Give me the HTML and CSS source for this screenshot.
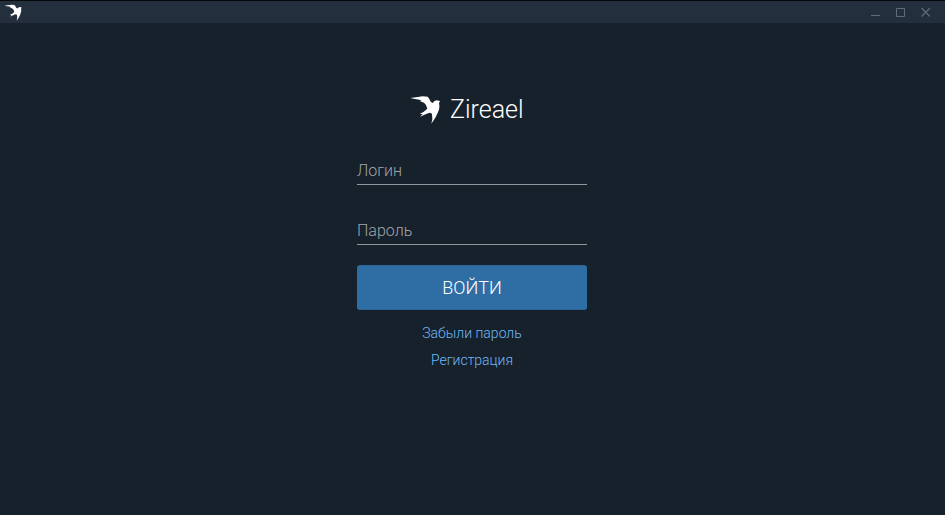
FILE: index.html
```html
<!DOCTYPE html>
<html lang="ru">
<head>
<meta charset="utf-8">
<title>Zireael</title>
<link rel="stylesheet" href="styles.css">
</head>
<body>
<svg class="defs" width="0" height="0">
  <symbol id="bird" viewBox="0 0 108 108">
    <path d="M7 24 L24 22 L44 19 L59 20 Q64 25 68 35 L74 39 Q79 31 86 31 L96 33 L93 40 Q97 53 89 69 Q82 86 70 101 Q75 86 72 72 L67 68 Q60 68 53 73 L36 80 L44 72 L35 72 Q48 66 58 56 Q57 45 48 38 L35 33 L41 31 Q30 28 20 27 Z"/>
  </symbol>
</svg>
<header class="titlebar">
  <svg class="app-icon"><use href="#bird"/></svg>
  <div class="controls">
    <svg viewBox="0 0 10 10"><path d="M0 8.5H9"/></svg>
    <svg viewBox="0 0 10 10"><path d="M.5 1.5H8.5V9.5H.5Z"/></svg>
    <svg viewBox="0 0 10 10"><path class="cross" d="M.5 1L9 9.5M9 1L.5 9.5"/></svg>
  </div>
</header>
<main class="login">
  <div class="brand">
    <svg class="logo"><use href="#bird"/></svg>
    <h1>Zireael</h1>
  </div>
  <form class="form">
    <input class="field" type="text" placeholder="Логин">
    <input class="field" type="password" placeholder="Пароль">
    <button class="submit" type="button">ВОЙТИ</button>
  </form>
  <nav class="links">
    <a>Забыли пароль</a>
    <a>Регистрация</a>
  </nav>
</main>
</body>
</html>
```
FILE: styles.css
```css
* { box-sizing: border-box; }
body {
  margin: 0;
  height: 515px;
  overflow: hidden;
  background: #17212b;
  font-family: Roboto, sans-serif;
}
.defs { display: block; }
.titlebar {
  display: flex;
  justify-content: space-between;
  height: 23px;
  border-top: 1px solid #05080b;
  background: #242f3d;
}
.app-icon {
  width: 21px;
  height: 21px;
  margin: 0 0 0 3px;
  fill: #fff;
}
.controls {
  display: flex;
  gap: 15px;
  padding: 6px 14px 0 0;
}
.controls svg {
  width: 10px;
  height: 10px;
  fill: none;
  stroke: #5f6b78;
}
.controls .cross { stroke-width: 1.2; }
.login {
  width: 230px;
  margin: 67px 0 0 357px;
}
.brand {
  display: flex;
  height: 65px;
  padding-left: 51px;
}
.logo {
  width: 36px;
  height: 36px;
  fill: #fff;
}
h1 {
  margin: 4px 0 0 6px;
  color: #fff;
  font-size: 25px;
  font-weight: 300;
  line-height: 31px;
}
.form { display: flex; flex-direction: column; }
.field {
  height: 30px;
  margin-bottom: 30px;
  padding: 2px 0 0;
  border: 0;
  border-bottom: 1px solid #90989d;
  border-radius: 0;
  background: none;
  color: #fff;
  font: 300 16px Roboto, sans-serif;
}
.field + .field { margin-bottom: 20px; }
.field::placeholder { color: #a0a5a9; opacity: 1; }
.submit {
  height: 45px;
  padding: 0 0 1px;
  border: 1px solid #2c6498;
  border-width: 1px 0;
  border-radius: 3px;
  background: #2f6ea5;
  color: #fff;
  font: 300 18px Roboto, sans-serif;
}
.links {
  display: flex;
  flex-direction: column;
  align-items: center;
  gap: 7px;
  padding-top: 13px;
  color: #70b8f8;
  font-size: 14px;
  font-weight: 300;
  line-height: 20px;
}
```
